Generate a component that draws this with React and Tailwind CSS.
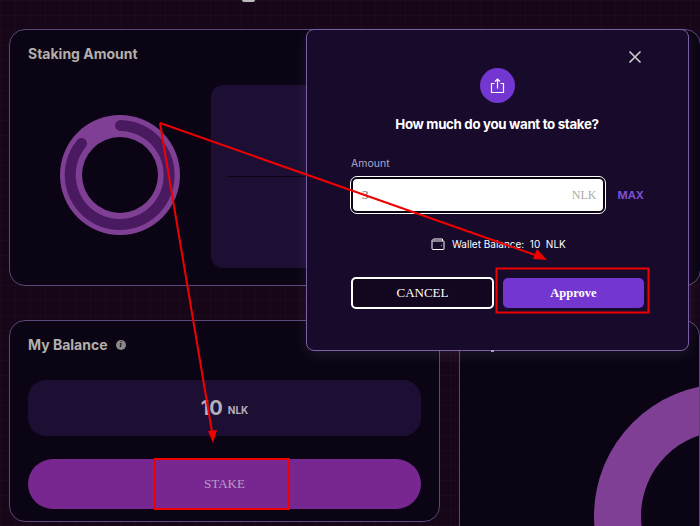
const Ring = () => (
  <svg width="120" height="120" viewBox="0 0 120 120" className="shrink-0">
    <path
      fillRule="evenodd"
      d="M60 0a60 60 0 1 0 0 120a60 60 0 1 0 0-120zM60 22a38 38 0 1 1 0 76a38 38 0 1 1 0-76z"
      fill="#7f3f94"
    />
    <path
      d="M60.5 10.5A49.5 49.5 0 1 1 21.5 28.5"
      fill="none"
      stroke="#4a1a60"
      strokeWidth="11"
      strokeLinecap="round"
    />
  </svg>
);

const Annotations = () => (
  <svg width="700" height="526" className="absolute left-0 top-0 pointer-events-none">
    <g fill="none" stroke="#f00000" strokeWidth="2">
      <path d="M160 123L538 256" />
      <path d="M160 123L212 432" />
    </g>
    <path d="M547 260L533 259L537 249Z" fill="#f00000" />
    <path d="M213 443L208 431L217 430Z" fill="#f00000" />
    <rect x="496.5" y="268.5" width="152" height="44" fill="none" stroke="#f00000" strokeWidth="2" />
    <rect x="155" y="459" width="134" height="50" fill="none" stroke="#f00000" strokeWidth="2" />
  </svg>
);

const StakeModal = () => (
  <div className="absolute left-[306px] top-[29px] w-[383px] h-[322px] rounded-lg border border-[#7a5fa8] bg-[#170a2a] shadow-[0_4px_14px_rgba(255,255,255,0.08)] pt-[38px] pl-[44px] pr-[44px] flex flex-col">
    <button className="absolute right-[46px] top-[20px] text-[#c9c9c9]">
      <svg width="14" height="14" viewBox="0 0 14 14" fill="none" stroke="currentColor" strokeWidth="1.7">
        <path d="M1.5 1.5L12.5 12.5M12.5 1.5L1.5 12.5" />
      </svg>
    </button>
    <div className="w-[35px] h-[35px] rounded-full bg-[#7336d1] self-center flex items-center justify-center ml-[-1px]">
      <svg width="15" height="16" viewBox="0 0 15 16" fill="none" stroke="white" strokeWidth="1.2">
        <path d="M4.5 5.5H1.5V14.5H13.5V5.5H10.5" />
        <path d="M7.5 10.5V1M5 3.5L7.5 1L10 3.5" />
      </svg>
    </div>
    <h2 className="mt-[12px] text-center text-white font-bold text-[13.3px] tracking-tight leading-[18px] ml-[-1px]">
      How much do you want to stake?
    </h2>
    <label className="mt-[24px] text-[10.5px] leading-[14px] text-[#a9a9d0]">Amount</label>
    <div className="mt-[6px] flex items-center">
      <div className="w-[255px] h-[36px] rounded-[6px] bg-white border-2 border-[#0c0414] outline outline-[1px] outline-white flex items-center justify-between pl-[9px] pr-[7px] font-['Liberation_Serif',serif]">
        <span className="text-[13px] text-[#666]">3</span>
        <span className="text-[12px] text-[#aaa]">NLK</span>
      </div>
      <span className="ml-[12px] text-[11px] font-bold text-[#7c4dcc]">MAX</span>
    </div>
    <div className="mt-[23px] ml-[80px] flex items-center h-[16px] text-white text-[10px]">
      <svg width="14" height="12" viewBox="0 0 14 12" fill="none" stroke="white" strokeWidth="1">
        <path d="M1 2.5L2.5 1H11.5V3M1 2.5V10.5A1 1 0 0 0 2 11.5H12.5A.5.5 0 0 0 13 11V3.5A.5.5 0 0 0 12.5 3H1.5" />
        <path d="M10.5 7.5H11" strokeWidth="1.5" />
      </svg>
      <span className="ml-[7px] whitespace-pre">Wallet Balance:  10  NLK</span>
    </div>
    <div className="mt-[25px] flex items-center font-['Liberation_Serif',serif] text-[13px]">
      <button className="w-[143px] h-[32px] rounded-[5px] border-2 border-white bg-[#12071f] text-white">CANCEL</button>
      <button className="ml-[9px] w-[141px] h-[30px] rounded-[5px] bg-[#7336d1] text-white font-bold text-[12.5px]">Approve</button>
    </div>
  </div>
);

const App = () => {
  return (
    <div className="relative w-[700px] h-[526px] overflow-hidden bg-[#170618] bg-[linear-gradient(rgba(255,255,255,0.015)_1px,transparent_1px),linear-gradient(90deg,rgba(255,255,255,0.015)_1px,transparent_1px)] bg-[size:15px_15px] font-['Inter','Liberation_Sans',sans-serif] pt-[29px] pl-[9px]">
      <div className="absolute left-[242px] top-0 w-[13px] h-[2px] rounded-b bg-[#bbb]" />

      <section className="w-[692px] h-[257px] rounded-2xl border border-[#5b4778] bg-[#0b0414] relative pl-[18px] pt-[15px]">
        <h3 className="text-[14px] leading-[18px] font-bold text-[#b3b0aa]">Staking Amount</h3>
        <div className="mt-[22px] flex items-start">
          <div className="ml-[32px] mt-[30px]">
            <Ring />
          </div>
          <div className="ml-[31px] w-[440px] h-[183px] rounded-xl bg-[#1d0e33] pt-[91px] pl-[16px]">
            <div className="h-px w-[240px] bg-[#0a0412]" />
          </div>
        </div>
      </section>

      <div className="mt-[34px] flex gap-[19px]">
        <section className="w-[431px] h-[202px] shrink-0 rounded-2xl border border-[#5b4778] bg-[#0b0414] px-[18px] pt-[15px]">
          <div className="flex items-center">
            <h3 className="text-[14px] leading-[18px] font-bold text-[#b3b0aa]">My Balance</h3>
            <span className="ml-[8px] w-[10px] h-[10px] rounded-full bg-[#8a8a8a] flex items-center justify-center text-[8px] leading-none font-bold italic font-['Liberation_Serif',serif] text-[#0b0414]">
              i
            </span>
          </div>
          <div className="mt-[26px] h-[56px] rounded-[18px] bg-[#1d0e33] flex items-center justify-center text-[#b3b0bb] font-bold">
            <span className="text-[20px] leading-none">10</span>
            <span className="ml-[5px] mt-[3px] text-[10px] leading-none">NLK</span>
          </div>
          <button className="mt-[23px] w-full h-[50px] rounded-full bg-[#782791] font-['Liberation_Serif',serif] text-[13px] text-[#b79cc4]">
            STAKE
          </button>
        </section>

        <section className="grow h-[300px] rounded-2xl border border-[#5b4778] bg-[#0b0414] overflow-hidden">
          <svg width="241" height="206" viewBox="0 0 241 206" className="block">
            <path
              fillRule="evenodd"
              transform="translate(-460 -321)"
              d="M726 384a132 132 0 1 0 0 264a132 132 0 1 0 0-264zM726 431a85 85 0 1 1 0 170a85 85 0 1 1 0-170z"
              fill="#7f3f94"
            />
          </svg>
        </section>
      </div>

      <StakeModal />
      <div className="absolute left-[491px] top-[350px] w-[3px] h-[2px] bg-[#a9a0b8]" />
      <Annotations />
    </div>
  );
};

export default App;
